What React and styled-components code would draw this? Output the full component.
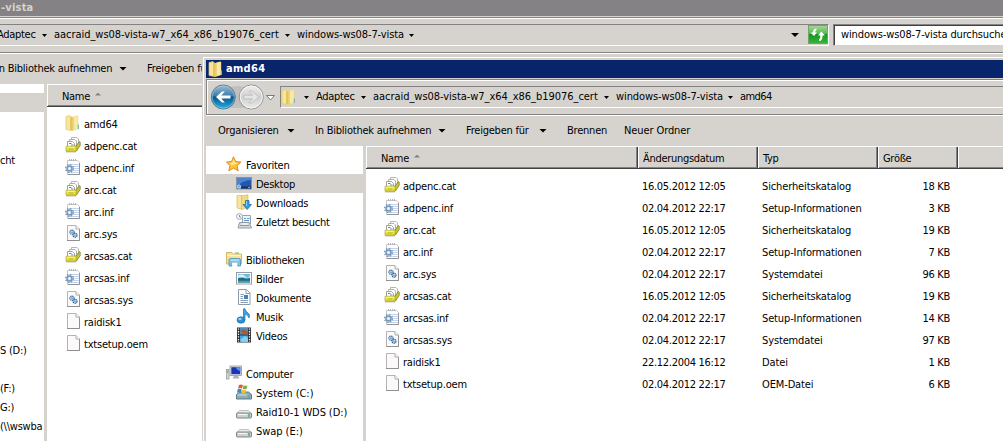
import styled, { createGlobalStyle, css } from "styled-components";

const face = "#d6d3ce";
const shadow = "#848284";
const dark = "#424142";

const GlobalStyle = createGlobalStyle`
  body {
    margin: 0;
    overflow: hidden;
    background: ${face};
  }
  * {
    box-sizing: border-box;
  }
`;

const Screen = styled.div`
  position: relative;
  width: 1003px;
  height: 441px;
  overflow: hidden;
  background: ${face};
  color: #000;
  font-family: "DejaVu Sans Condensed", "DejaVu Sans", sans-serif;
  font-stretch: condensed;
  font-size: 11px;
  letter-spacing: -0.3px;
  line-height: 14px;
  white-space: nowrap;
`;

const Window = styled.div`
  display: flex;
  flex-direction: column;
  height: 441px;
`;

// the active window lies over the inactive one
const FrontWindow = styled(Window)`
  position: absolute;
  left: 202px;
  top: 56px;
  width: 801px;
  height: 385px;
  background: ${face};
  border-left: 1px solid ${face};
  border-top: 1px solid ${face};
`;

const Frame = styled.div`
  display: flex;
  flex-direction: column;
  flex: 1;
  min-height: 0;
  border-left: 1px solid #fff;
  border-top: 1px solid #fff;
  padding: 2px 0 0 2px;
`;

const TitleBar = styled.div`
  flex: none;
  display: flex;
  align-items: center;
  height: ${(props) => (props.$active ? 18 : 16)}px;
  margin-bottom: 1px;
  padding-left: ${(props) => (props.$active ? 2 : 1)}px;
  gap: 2px;
  background: ${(props) => (props.$active ? "#08246b" : shadow)};
  color: ${(props) => (props.$active ? "#fff" : face)};
  font-weight: bold;
  letter-spacing: ${(props) => (props.$active ? 0.3 : 0.2)}px;
`;

const NavBar = styled.div`
  flex: none;
  display: flex;
  align-items: flex-start;
  height: 36px;
  border: 0 solid ${shadow};
  border-width: 1px 0 1px ${(props) => (props.$edge ? 1 : 0)}px;
  box-shadow: inset ${(props) => (props.$edge ? 1 : 0)}px 1px 0 #fff, 0 1px 0 #fff;
  padding-top: 6px;
`;

const Address = styled.div`
  display: flex;
  align-items: center;
  flex: ${(props) => (props.$width ? "none" : 1)};
  width: ${(props) => props.$width}px;
  height: 22px;
  border-top: 1px solid ${shadow};
  border-bottom: 1px solid #fff;
  ${(props) =>
    props.$width
      ? css`
          border-right: 1px solid #fff;
        `
      : css`
          border-left: 1px solid ${shadow};
        `}
`;

const Crumb = styled.span`
  flex: none;
  width: ${(props) => props.$width}px;
  margin-left: ${(props) => props.$offset || 0}px;
  letter-spacing: ${(props) => props.$spacing ?? -0.3}px;
`;

const CrumbArrow = styled.i`
  flex: none;
  width: 5px;
  height: 3px;
  margin: 1px 7px 0 6px;
  background: #000;
  clip-path: polygon(0 0, 100% 0, 50% 100%);
`;

const Arrow = styled.i`
  flex: none;
  width: 8px;
  height: 4px;
  background: #000;
  clip-path: polygon(0 0, 100% 0, 50% 100%);
`;

const Spacer = styled.div`
  flex: 1;
`;

const Refresh = styled.div`
  width: 20px;
  height: 20px;
  margin-left: 9px;
`;

const Search = styled.div`
  flex: 1;
  height: 22px;
  margin-left: 4px;
  padding: 3px 0 0 7px;
  overflow: hidden;
  background: #fff;
  border: 0 solid ${shadow};
  border-width: 1px 0 0 1px;
  border-bottom: 1px solid ${face};
  box-shadow: inset 1px 1px 0 ${dark};
  letter-spacing: -0.13px;
`;

const Toolbar = styled.div`
  flex: none;
  display: flex;
  align-items: center;
  height: ${(props) => props.$height}px;
  padding-left: ${(props) => props.$indent || 0}px;
  margin-left: ${(props) => props.$shift || 0}px;
`;

const Command = styled.div`
  flex: none;
  display: flex;
  align-items: center;
  justify-content: space-between;
  width: ${(props) => props.$width}px;
  margin-right: ${(props) => props.$gap ?? 20}px;
  letter-spacing: ${(props) => props.$spacing ?? -0.22}px;
`;

const Body = styled.div`
  display: flex;
  flex: 1;
  min-height: 0;
`;

const Pane = styled.div`
  flex: none;
  width: ${(props) => props.$width}px;
  margin-right: 3px;
  padding-top: 9px;
  background: #fff;
  overflow: hidden;
`;

const PaneRow = styled.div`
  display: flex;
  align-items: center;
  height: 19px;
  padding-top: 2px;
  padding-left: ${(props) => props.$indent || 0}px;
  gap: 4px;
  background: ${(props) => (props.$selected ? face : "transparent")};
  letter-spacing: ${(props) => props.$spacing ?? -0.25}px;
  line-height: 15px;
  svg {
    margin-top: -3px;
  }
`;

const List = styled.div`
  flex: 1;
  background: #fff;
`;

const Header = styled.div`
  display: flex;
  height: 23px;
  background: ${face};
  border-top: 1px solid #fff;
  border-bottom: 1px solid ${dark};
  box-shadow: inset 0 -1px 0 ${shadow};
`;

const HeadCell = styled.div`
  flex: none;
  display: flex;
  align-items: center;
  width: ${(props) => props.$width}px;
  padding-top: 2px;
  padding-left: ${(props) => props.$indent ?? 4}px;
  border-left: 1px solid #fff;
  border-right: ${(props) => (props.$last ? 0 : 1)}px solid ${dark};
  box-shadow: inset ${(props) => (props.$last ? 0 : -1)}px -1px 0 ${shadow};
`;

const SortMark = styled.i`
  width: 6px;
  height: 3px;
  margin: -5px 0 0 5px;
  background: ${shadow};
  clip-path: polygon(50% 0, 100% 100%, 0 100%);
`;

const Rows = styled.div`
  padding-top: 6px;
`;

const FileRow = styled.div`
  display: grid;
  grid-template-columns: ${(props) =>
    props.$details ? "258px 120px 112px 76px" : "1fr"};
  align-items: center;
  height: 22px;
  padding-top: 2px;
  padding-left: 18px;
`;

const FileName = styled.div`
  display: flex;
  align-items: center;
  gap: 3px;
  letter-spacing: -0.2px;
  svg {
    margin-top: -4px;
  }
`;

const FileType = styled.div`
  letter-spacing: -0.13px;
`;

const Size = styled.div`
  text-align: right;
`;

const Icon = styled.svg.attrs({ width: 16, height: 16, viewBox: "0 0 16 16" })`
  flex: none;
  display: block;
  overflow: visible;
`;

const NavButtons = styled.svg`
  flex: none;
  display: block;
  width: 73px;
  height: 28px;
  margin-top: -3px;
`;

function FolderIcon() {
  return (
    <Icon>
      <path d="M1 1.5 5 0.5 6.5 2V15.5L1 14.5Z" fill="#f6e59a" stroke="#e3c765" strokeWidth=".7" />
      <path d="M5.5 2.5 12 .5 13.2 1V14L7 16 5.5 15Z" fill="#efd574" />
      <path d="M8.5 1.8 12.7 1V13.5L8.5 15Z" fill="#f8e9a4" />
      <path d="M6 2V15" stroke="#d9b94f" strokeWidth="1.2" />
      <path d="M8 2V15.3" stroke="#e2c765" strokeWidth=".8" />
      <path d="M13.4 9.5V14" stroke="#7fbbad" strokeWidth="1.2" />
    </Icon>
  );
}

function CatIcon() {
  return (
    <Icon>
      <path d="M6.5 .5H12L13.5 2V7H6.5Z" fill="#fff" stroke="#b5b5b5" />
      <path d="M4.5 2.5H10L11.5 4V9H4.5Z" fill="#fff" stroke="#b0b0b0" />
      <path d="M2.5 4.5H7.5L9.5 6.5V10H2.5Z" fill="#fff" stroke="#a0a0a0" />
      <path d="M4 6.5H6.5M6 8H8.5" stroke="#6485b4" />
      <path d="M10.5 10 14.5 4.5 15.2 5V8.5L11.5 14H10.5Z" fill="#c9c430" stroke="#77742a" strokeWidth=".7" />
      <path d="M1 9.3H11V14H1Z" fill="#ece536" stroke="#a5a03c" strokeWidth=".7" />
      <path d="M1.5 10.2H10.5" stroke="#fbf98c" />
      <path d="M3.5 12H8.5" stroke="#b5b044" />
      <path d="M1 14.8H11" stroke="#a09d84" />
    </Icon>
  );
}

function InfIcon() {
  return (
    <Icon>
      <path d="M2.5 1.5H12.5L14.5 3.5V15.5H2.5Z" fill="#fff" stroke="#c5c5c5" />
      <path d="M4.5 0V2M6.5 0V2M8.5 0V2M10.5 0V2" stroke="#b5b5b5" />
      <path d="M4 5.5H14M4 7.5H14M4 9.5H14M4 11.5H14M4 13.5H14" stroke="#c3d4ea" />
      <path d="M14.5 4V15.5H3" fill="none" stroke="#959295" />
      <circle cx="4.5" cy="9.5" r="3.9" fill="none" stroke="#7898b8" strokeWidth="1.4" strokeDasharray="1.53 1.53" />
      <circle cx="4.5" cy="9.5" r="2.5" fill="#c6dced" stroke="#7596b8" strokeWidth="1.4" />
      <circle cx="4.5" cy="9.5" r="1" fill="#fff" />
    </Icon>
  );
}

function Sheet() {
  return (
    <>
      <path d="M2.5 .5H11L14.5 4V15.5H2.5Z" fill="#fbf9fa" stroke="#b5b3b5" />
      <path d="M11 .5V4H14.5" fill="#fff" stroke="#aaa" />
      <path d="M14.5 4.5V15.5H2" fill="none" stroke="#918f91" />
    </>
  );
}

function PageIcon() {
  return (
    <Icon>
      <Sheet />
    </Icon>
  );
}

function SysIcon() {
  return (
    <Icon>
      <Sheet />
      <circle cx="7" cy="7.2" r="2.1" fill="#d8e9f5" stroke="#427aad" strokeWidth="1.2" strokeDasharray="1.4 .4" />
      <circle cx="7" cy="7.2" r=".7" fill="#2f6394" />
      <circle cx="10" cy="10.2" r="2" fill="#d8e9f5" stroke="#2f689c" strokeWidth="1.2" strokeDasharray="1.4 .4" />
      <circle cx="10" cy="10.2" r=".6" fill="#2f6394" />
    </Icon>
  );
}

function StarIcon() {
  return (
    <Icon>
      <path
        d="M7.5.8 9.6 5.5 15 6.1 11 9.6 12.2 14.8 7.5 12.2 2.8 14.8 4 9.6.5 6.1 5.5 5.5Z"
        fill="#f8c43c"
        stroke="#e08c2a"
        strokeLinejoin="round"
      />
      <path d="M7.5 3.2 8.8 6.5 12.2 7 6 9.5 5.2 11.5 5.6 9 3.5 7 6.3 6.5Z" fill="#fde88c" />
    </Icon>
  );
}

function DesktopIcon() {
  return (
    <Icon>
      <rect x=".5" y="2.5" width="15" height="11.5" fill="#2356ad" stroke="#8793a5" />
      <path d="M1 3H15V5Q8 5 1 11Z" fill="#4c83d3" />
      <path d="M1 12.5H15" stroke="#1e2f55" strokeWidth="2" />
      <path d="M1 12.5H5" stroke="#93c3df" strokeWidth="2" />
      <circle cx="3" cy="11.5" r="1.7" fill="#6cb0e2" stroke="#c9e4f5" strokeWidth=".7" />
      <path d="M12 12.5H14" stroke="#8aa2c5" />
    </Icon>
  );
}

function DownloadsIcon() {
  return (
    <Icon>
      <path d="M1 1.5H6V15L1 14Z" fill="#f6e59a" stroke="#d9ba58" strokeWidth=".7" />
      <path d="M5.5 2 12 .8V13L5.5 15.5Z" fill="#f1db82" stroke="#d9ba58" strokeWidth=".7" />
      <path d="M9.5 6.5H13V10.5H15.5L11.2 15.5 7 10.5H9.5Z" fill="#3597dc" stroke="#256fae" strokeWidth=".8" />
      <path d="M10.5 7.3V12" stroke="#91d0f5" />
    </Icon>
  );
}

function RecentIcon() {
  return (
    <Icon>
      <path d="M6.5 2.5H14.5V11H6.5Z" fill="#eef3f8" stroke="#99a3ad" />
      <path d="M8 5.5H10M11 5.5H13.5M8 7.5H13" stroke="#6298c7" />
      <path d="M3.5 9.5H13L15.5 15H2Z" fill="#d6dade" stroke="#929ca5" />
      <path d="M4 12.5H13" stroke="#8e979e" />
      <path d="M6 11H12" stroke="#fff" />
      <circle cx="3.5" cy="3.5" r="3" fill="#f4f6f8" stroke="#a4adb6" />
      <path d="M3.5 2V4H5" fill="none" stroke="#707a84" strokeWidth=".8" />
    </Icon>
  );
}

function LibraryIcon() {
  return (
    <Icon>
      <path d="M.5 3V1.5H6L7.5 3H15.5V13H.5Z" fill="#f3e09a" stroke="#c8a951" strokeWidth=".8" />
      <path d="M1 4.5H15" stroke="#fdf4c0" strokeWidth="1.4" />
      <path d="M9 2H13" stroke="#73b569" />
      <path d="M3 15V9Q3 7.5 5 7.5H12.5Q14.5 7.5 14.5 9V15H11.5V11.5H6V15Z" fill="#82c5e8" stroke="#4591be" strokeWidth=".8" />
      <path d="M6 11.5H11.5V14.5H6Z" fill="#fff" />
      <path d="M4.5 9H13" stroke="#cceefc" />
    </Icon>
  );
}

function PicturesIcon() {
  return (
    <Icon>
      <rect x=".5" y="2.5" width="15" height="11.5" fill="#fff" stroke="#999da1" />
      <rect x="2" y="4" width="12" height="8.5" fill="#6ab9e4" />
      <path d="M2 8.5 6 7 10 9 14 8V12.5H2Z" fill="#246c7d" />
      <path d="M2 5.5Q6 3.5 9 6T14 5.5V7.5H2Z" fill="#d7f1fb" />
      <path d="M2 11.5H14" stroke="#47a19b" strokeWidth="1.5" />
    </Icon>
  );
}

function DocumentsIcon() {
  return (
    <Icon>
      <path d="M2.5 .5H10.5L14 4V15.5H2.5Z" fill="#fafcff" stroke="#8f9baa" />
      <path d="M10 .5V4.5H14" fill="#fff" stroke="#8f9baa" />
      <path d="M4.5 5.5H8M4.5 7.5H7M4.5 9.5H7M4.5 11.5H12M4.5 13.5H12" stroke="#899db4" />
      <path d="M8 6H12V10H8Z" fill="#3e83bb" />
    </Icon>
  );
}

function MusicIcon() {
  return (
    <Icon>
      <ellipse cx="5" cy="12" rx="4" ry="3.2" fill="#2d91d2" stroke="#2272ad" strokeWidth=".7" />
      <path d="M7.5 12V.8H9Q9.5 3.5 12 5T13 10Q12 6.5 9 6V12Z" fill="#3ba5df" stroke="#2272ad" strokeWidth=".7" />
      <ellipse cx="4" cy="11" rx="1.7" ry="1" fill="#9cdcf7" />
    </Icon>
  );
}

function VideosIcon() {
  return (
    <Icon>
      <rect x="1" y=".5" width="14" height="15" fill="#303334" />
      <rect x="4" y="1" width="8" height="6.5" fill="#528db7" />
      <rect x="4" y="8.5" width="8" height="6.5" fill="#4aa5df" />
      <path d="M4 4 8 2 12 5V7.5H8Z" fill="#a65a46" />
      <path d="M4 13 9 9 12 11V15H6Z" fill="#81d0f4" />
      <path d="M2.5 1.5V15M13.5 1.5V15" stroke="#fff" strokeWidth="1.2" strokeDasharray="1.3 1.3" />
    </Icon>
  );
}

function ComputerIcon() {
  return (
    <Icon>
      <rect x=".5" y="4.5" width="2.5" height="9.5" fill="#d6dadc" stroke="#8c9295" strokeWidth=".7" />
      <path d="M1.8 5.5V8" stroke="#46ae49" />
      <rect x="4" y="1" width="11.5" height="9.5" fill="#dce0e6" stroke="#9198a2" strokeWidth=".8" />
      <rect x="5.3" y="2.2" width="9" height="7" fill="#1736b2" />
      <path d="M9.5 2.2H14.3V6Q11.5 6 9.5 2.2Z" fill="#6d8bed" />
      <path d="M8 11H12L13.5 13.5H6.5Z" fill="#aab1b9" />
    </Icon>
  );
}

function DriveIcon() {
  return (
    <Icon>
      <path d="M1 10.5 3.5 7.5H12.5L15.5 10.5Z" fill="#ececec" stroke="#aaa" strokeWidth=".7" />
      <rect x=".5" y="10" width="15" height="5" rx="1" fill="#cfcfcf" stroke="#777" strokeWidth=".9" />
      <path d="M2 11.5H11" stroke="#f7f7f7" />
      <path d="M13 11V14" stroke="#3bb54d" strokeWidth="1.4" />
    </Icon>
  );
}

function SystemDriveIcon() {
  return (
    <Icon>
      <path d="M.5 10.5 3.5 8H12.5L15.5 10.5V15H.5Z" fill="#8eabb8" stroke="#58717c" strokeWidth=".9" />
      <path d="M1.5 11H11" stroke="#d0e2e9" />
      <path d="M13 11V14" stroke="#43c653" strokeWidth="1.4" />
      <path d="M3 1Q5 0 7 1L6 4.5Q4 3.5 2 4.5Z" fill="#e45d2b" />
      <path d="M7.6 1.2Q9.5 2.2 11.5 1.2L10.5 5Q8.5 5.8 6.7 4.8Z" fill="#74b340" />
      <path d="M1.8 5Q3.8 4.2 5.8 5.2L4.8 8.8Q3 7.8 1 8.8Z" fill="#378bd0" />
      <path d="M6.5 5.5Q8.3 6.5 10.3 5.7L9.3 9.3Q7.5 10 5.5 9Z" fill="#f5be31" />
    </Icon>
  );
}

function RefreshIcon() {
  return (
    <svg width="20" height="20" viewBox="0 0 20 20" display="block">
      <defs>
        <linearGradient id="refreshFill" x2="0" y2="1">
          <stop offset="0" stopColor="#a2d997" />
          <stop offset=".45" stopColor="#5cb653" />
          <stop offset=".5" stopColor="#169522" />
          <stop offset="1" stopColor="#37b63b" />
        </linearGradient>
      </defs>
      <rect x=".5" y=".5" width="19" height="18" fill="url(#refreshFill)" stroke="#6aa868" />
      <path d="M8.5 3.5Q5 3.5 5 7.5H2.5L6 11 9 7.5H7.2Q7.2 5.5 8.5 5Z" fill="#fff" />
      <path d="M11 16Q14.6 16 14.6 10.5H17L13.3 6.5 10 10.5H12.4Q12.5 13.5 11 14.5Z" fill="#fff" />
    </svg>
  );
}

function BackForward() {
  return (
    <NavButtons viewBox="0 0 73 28">
      <defs>
        <linearGradient id="backFill" x2="0" y2="1">
          <stop offset="0" stopColor="#9fbfd3" />
          <stop offset=".45" stopColor="#3f7ea9" />
          <stop offset=".5" stopColor="#0a5487" />
          <stop offset="1" stopColor="#22b4ea" />
        </linearGradient>
        <linearGradient id="forwardFill" x2="0" y2="1">
          <stop offset="0" stopColor="#f0f0f0" />
          <stop offset=".5" stopColor="#cfcfcf" />
          <stop offset="1" stopColor="#ececec" />
        </linearGradient>
      </defs>
      <path d="M16 3H45V25H16Z" fill="#c0bfbe" />
      <path d="M16 1Q30 7 45 1V4H16ZM16 27Q30 20 45 27V24H16Z" fill={face} />
      <circle cx="16.3" cy="14" r="12" fill="url(#backFill)" stroke="#5d7f94" />
      <circle cx="16.3" cy="14" r="11" fill="none" stroke="#a8d2e8" strokeOpacity=".55" />
      <path d="M9 14 15 8.5H17.8L14.3 12.5H23.5V15.5H14.3L17.8 19.5H15Z" fill="#fff" />
      <circle cx="44.3" cy="14" r="12" fill="url(#forwardFill)" stroke="#929292" />
      <circle cx="44.3" cy="14" r="11" fill="none" stroke="#f7f7f7" />
      <path
        d="M51.5 14 45 8H42L45.7 12.2H37V15.8H45.7L42 20H45Z"
        fill="#e5e5e5"
        stroke="#bcbcbc"
        strokeWidth=".8"
      />
      <path d="M59.5 12.5H67.5L63.5 17Z" fill="#fff" stroke="#777b88" />
    </NavButtons>
  );
}

const icons = {
  dir: FolderIcon,
  cat: CatIcon,
  inf: InfIcon,
  sys: SysIcon,
  page: PageIcon,
};

const files = [
  { name: "adpenc.cat", icon: "cat", date: "16.05.2012 12:05", type: "Sicherheitskatalog", size: "18 KB" },
  { name: "adpenc.inf", icon: "inf", date: "02.04.2012 22:17", type: "Setup-Informationen", size: "3 KB" },
  { name: "arc.cat", icon: "cat", date: "16.05.2012 12:05", type: "Sicherheitskatalog", size: "19 KB" },
  { name: "arc.inf", icon: "inf", date: "02.04.2012 22:17", type: "Setup-Informationen", size: "7 KB" },
  { name: "arc.sys", icon: "sys", date: "02.04.2012 22:17", type: "Systemdatei", size: "96 KB" },
  { name: "arcsas.cat", icon: "cat", date: "16.05.2012 12:05", type: "Sicherheitskatalog", size: "19 KB" },
  { name: "arcsas.inf", icon: "inf", date: "02.04.2012 22:17", type: "Setup-Informationen", size: "14 KB" },
  { name: "arcsas.sys", icon: "sys", date: "02.04.2012 22:17", type: "Systemdatei", size: "97 KB" },
  { name: "raidisk1", icon: "page", date: "22.12.2004 16:12", type: "Datei", size: "1 KB" },
  { name: "txtsetup.oem", icon: "page", date: "02.04.2012 22:17", type: "OEM-Datei", size: "6 KB" },
];

const places = [
  { label: "Favoriten", icon: StarIcon, root: true },
  { label: "Desktop", icon: DesktopIcon, selected: true },
  { label: "Downloads", icon: DownloadsIcon },
  { label: "Zuletzt besucht", icon: RecentIcon },
  null,
  { label: "Bibliotheken", icon: LibraryIcon, root: true },
  { label: "Bilder", icon: PicturesIcon },
  { label: "Dokumente", icon: DocumentsIcon },
  { label: "Musik", icon: MusicIcon },
  { label: "Videos", icon: VideosIcon },
  null,
  { label: "Computer", icon: ComputerIcon, root: true },
  { label: "System (C:)", icon: SystemDriveIcon, spacing: -0.05 },
  { label: "Raid10-1 WDS (D:)", icon: DriveIcon, spacing: -0.1 },
  { label: "Swap (E:)", icon: DriveIcon, spacing: -0.05 },
];

// what is left of the scrolled pane, one entry for each row
const clippedPlaces = ["*", "", "", "cht", "", "", "", "", "", "", "", "", "", "S (D:)", "", "(F:)", "G:)", "(\\\\wswba"];

function File({ name, icon, date, type, size, details }) {
  const FileIcon = icons[icon];
  return (
    <FileRow $details={details}>
      <FileName>
        <FileIcon />
        {name}
      </FileName>
      {details && (
        <>
          <div>{date}</div>
          <FileType>{type}</FileType>
          <Size>{size}</Size>
        </>
      )}
    </FileRow>
  );
}

function Path() {
  return (
    <>
      <Crumb $width={39}>Adaptec</Crumb>
      <CrumbArrow />
      <Crumb $width={225} $spacing={-0.04}>
        aacraid_ws08-vista-w7_x64_x86_b19076_cert
      </Crumb>
      <CrumbArrow />
      <Crumb $width={106} $spacing={-0.1}>
        windows-ws08-7-vista
      </Crumb>
      <CrumbArrow />
    </>
  );
}

function BackExplorer() {
  return (
    <Window>
      <TitleBar>-vista</TitleBar>
      <NavBar>
        <Address $width={829}>
          <Crumb $offset={-3} />
          <Path />
          <Spacer />
          <Arrow />
          <Refresh>
            <RefreshIcon />
          </Refresh>
        </Address>
        <Search>windows-ws08-7-vista durchsuchen</Search>
      </NavBar>
      <Toolbar $height={31} $shift={-4}>
        <Command $width={131}>
          In Bibliothek aufnehmen <Arrow />
        </Command>
        <Command $width={81} $spacing={-0.15}>
          Freigeben für <Arrow />
        </Command>
      </Toolbar>
      <Body>
        <Pane $width={44}>
          {clippedPlaces.map((label, i) => (
            <PaneRow key={i} $selected={label === "*"}>
              {label === "*" ? "" : label}
            </PaneRow>
          ))}
        </Pane>
        <List>
          <Header>
            <HeadCell $indent={14} $width={956} $last>
              Name <SortMark />
            </HeadCell>
          </Header>
          <Rows>
            <File name="amd64" icon="dir" />
            {files.map((file) => (
              <File key={file.name} name={file.name} icon={file.icon} />
            ))}
          </Rows>
        </List>
      </Body>
    </Window>
  );
}

function FrontExplorer() {
  return (
    <FrontWindow>
      <Frame>
        <TitleBar $active>
          <FolderIcon />
          amd64
        </TitleBar>
        <NavBar $edge>
          <BackForward />
          <Address>
            <FolderIcon />
            <Crumb $offset={1} />
            <CrumbArrow />
            <Path />
            <Crumb $spacing={-0.6}>amd64</Crumb>
          </Address>
        </NavBar>
        <Toolbar $height={31} $indent={12}>
          <Command $width={77}>
            Organisieren <Arrow />
          </Command>
          <Command $width={131}>
            In Bibliothek aufnehmen <Arrow />
          </Command>
          <Command $width={81}>
            Freigeben für <Arrow />
          </Command>
          <Command $width={41} $gap={16}>
            Brennen
          </Command>
          <Command $spacing={-0.1}>Neuer Ordner</Command>
        </Toolbar>
        <Body>
          <Pane $width={157}>
            {places.map((place, i) => {
              if (!place) {
                return <PaneRow key={i} />;
              }
              const PlaceIcon = place.icon;
              return (
                <PaneRow
                  key={i}
                  $indent={place.root ? 20 : 30}
                  $selected={place.selected}
                  $spacing={place.spacing}
                >
                  <PlaceIcon />
                  {place.label}
                </PaneRow>
              );
            })}
          </Pane>
          <List>
            <Header>
              <HeadCell $indent={14} $width={272}>
                Name <SortMark />
              </HeadCell>
              <HeadCell $width={120}>Änderungsdatum</HeadCell>
              <HeadCell $width={120}>Typ</HeadCell>
              <HeadCell $width={80}>Größe</HeadCell>
              <HeadCell $width={45} $last />
            </Header>
            <Rows>
              {files.map((file) => (
                <File key={file.name} {...file} details />
              ))}
            </Rows>
          </List>
        </Body>
      </Frame>
    </FrontWindow>
  );
}

function App() {
  return (
    <>
      <GlobalStyle />
      <Screen>
        <BackExplorer />
        <FrontExplorer />
      </Screen>
    </>
  );
}
export default App;
